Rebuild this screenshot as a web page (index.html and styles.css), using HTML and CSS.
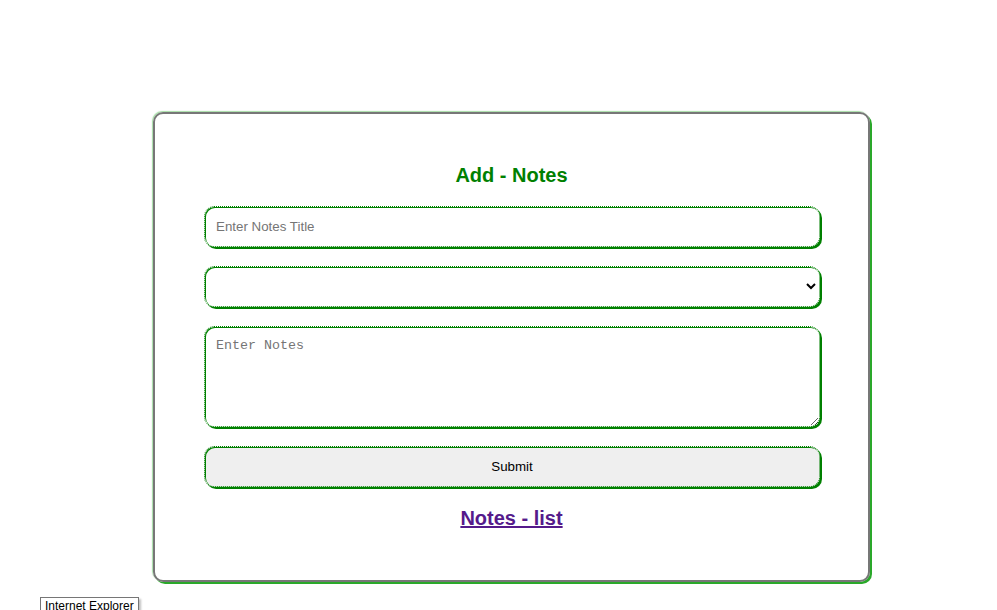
FILE: index.html
```html
<!DOCTYPE html>
<html>
<head>
<meta charset="utf-8">
<link rel="stylesheet" href="styles.css">
</head>
<body>
<div class="card">
  <h2 class="title">Add - Notes</h2>
  <form class="form">
    <input class="field" type="text" placeholder="Enter Notes Title">
    <select class="field select"><option></option></select>
    <textarea class="field area" placeholder="Enter Notes"></textarea>
    <button class="field btn" type="button">Submit</button>
  </form>
  <a class="link" href="#">Notes - list</a>
</div>
<div class="tip">Internet Explorer</div>
</body>
</html>
```
FILE: styles.css
```css
html, body { margin: 0; padding: 0; background: #fff; }
body { font-family: "Liberation Sans", Arial, sans-serif; height: 610px; overflow: hidden; position: relative; }
.card {
  box-sizing: border-box;
  margin: 112px 0 0 153px;
  width: 717px;
  height: 470px;
  border: 2px solid #777;
  border-radius: 10px;
  box-shadow: 2px 2px 0 #2aa82a, -1px -1px 1px rgba(0,160,0,0.35);
  padding: 50px 49px 0 49px;
  display: flex;
  flex-direction: column;
  align-items: center;
}
.title {
  margin: 0 0 19px;
  font-size: 20px;
  font-weight: bold;
  color: #008000;
  line-height: 23px;
}
.form { width: 100%; display: flex; flex-direction: column; gap: 19px; }
.field {
  box-sizing: border-box;
  width: 616px;
  height: 41px;
  border: 1px dotted #008000;
  border-radius: 10px;
  box-shadow: 2px 2px 0 #008000, 1px 1px 0 #008000 inset;
  background: #fff;
  font-family: "Liberation Sans", Arial, sans-serif;
  font-size: 13.33px;
  padding: 0 11px;
  margin: 0;
  outline: none;
}
.field::placeholder { color: #757575; }
.select { padding: 0 2px 0 8px; color: #000; }
.area {
  height: 101px;
  padding: 11px 11px;
  font-family: "Liberation Mono", "DejaVu Sans Mono", monospace;
  font-size: 13.33px;
  resize: vertical;
}
.btn { background: #efefef; color: #000; text-align: center; }
.link {
  margin-top: 20px;
  font-size: 20px;
  font-weight: bold;
  line-height: 23px;
  color: #551a8b;
  text-decoration: underline;
}
.tip {
  position: absolute;
  left: 40px;
  top: 597px;
  padding: 0 4px;
  border: 1px solid #767676;
  background: #fff;
  font-size: 12px;
  line-height: 16px;
  color: #000;
  box-shadow: 2px 2px 2px rgba(0,0,0,0.25);
}
```
